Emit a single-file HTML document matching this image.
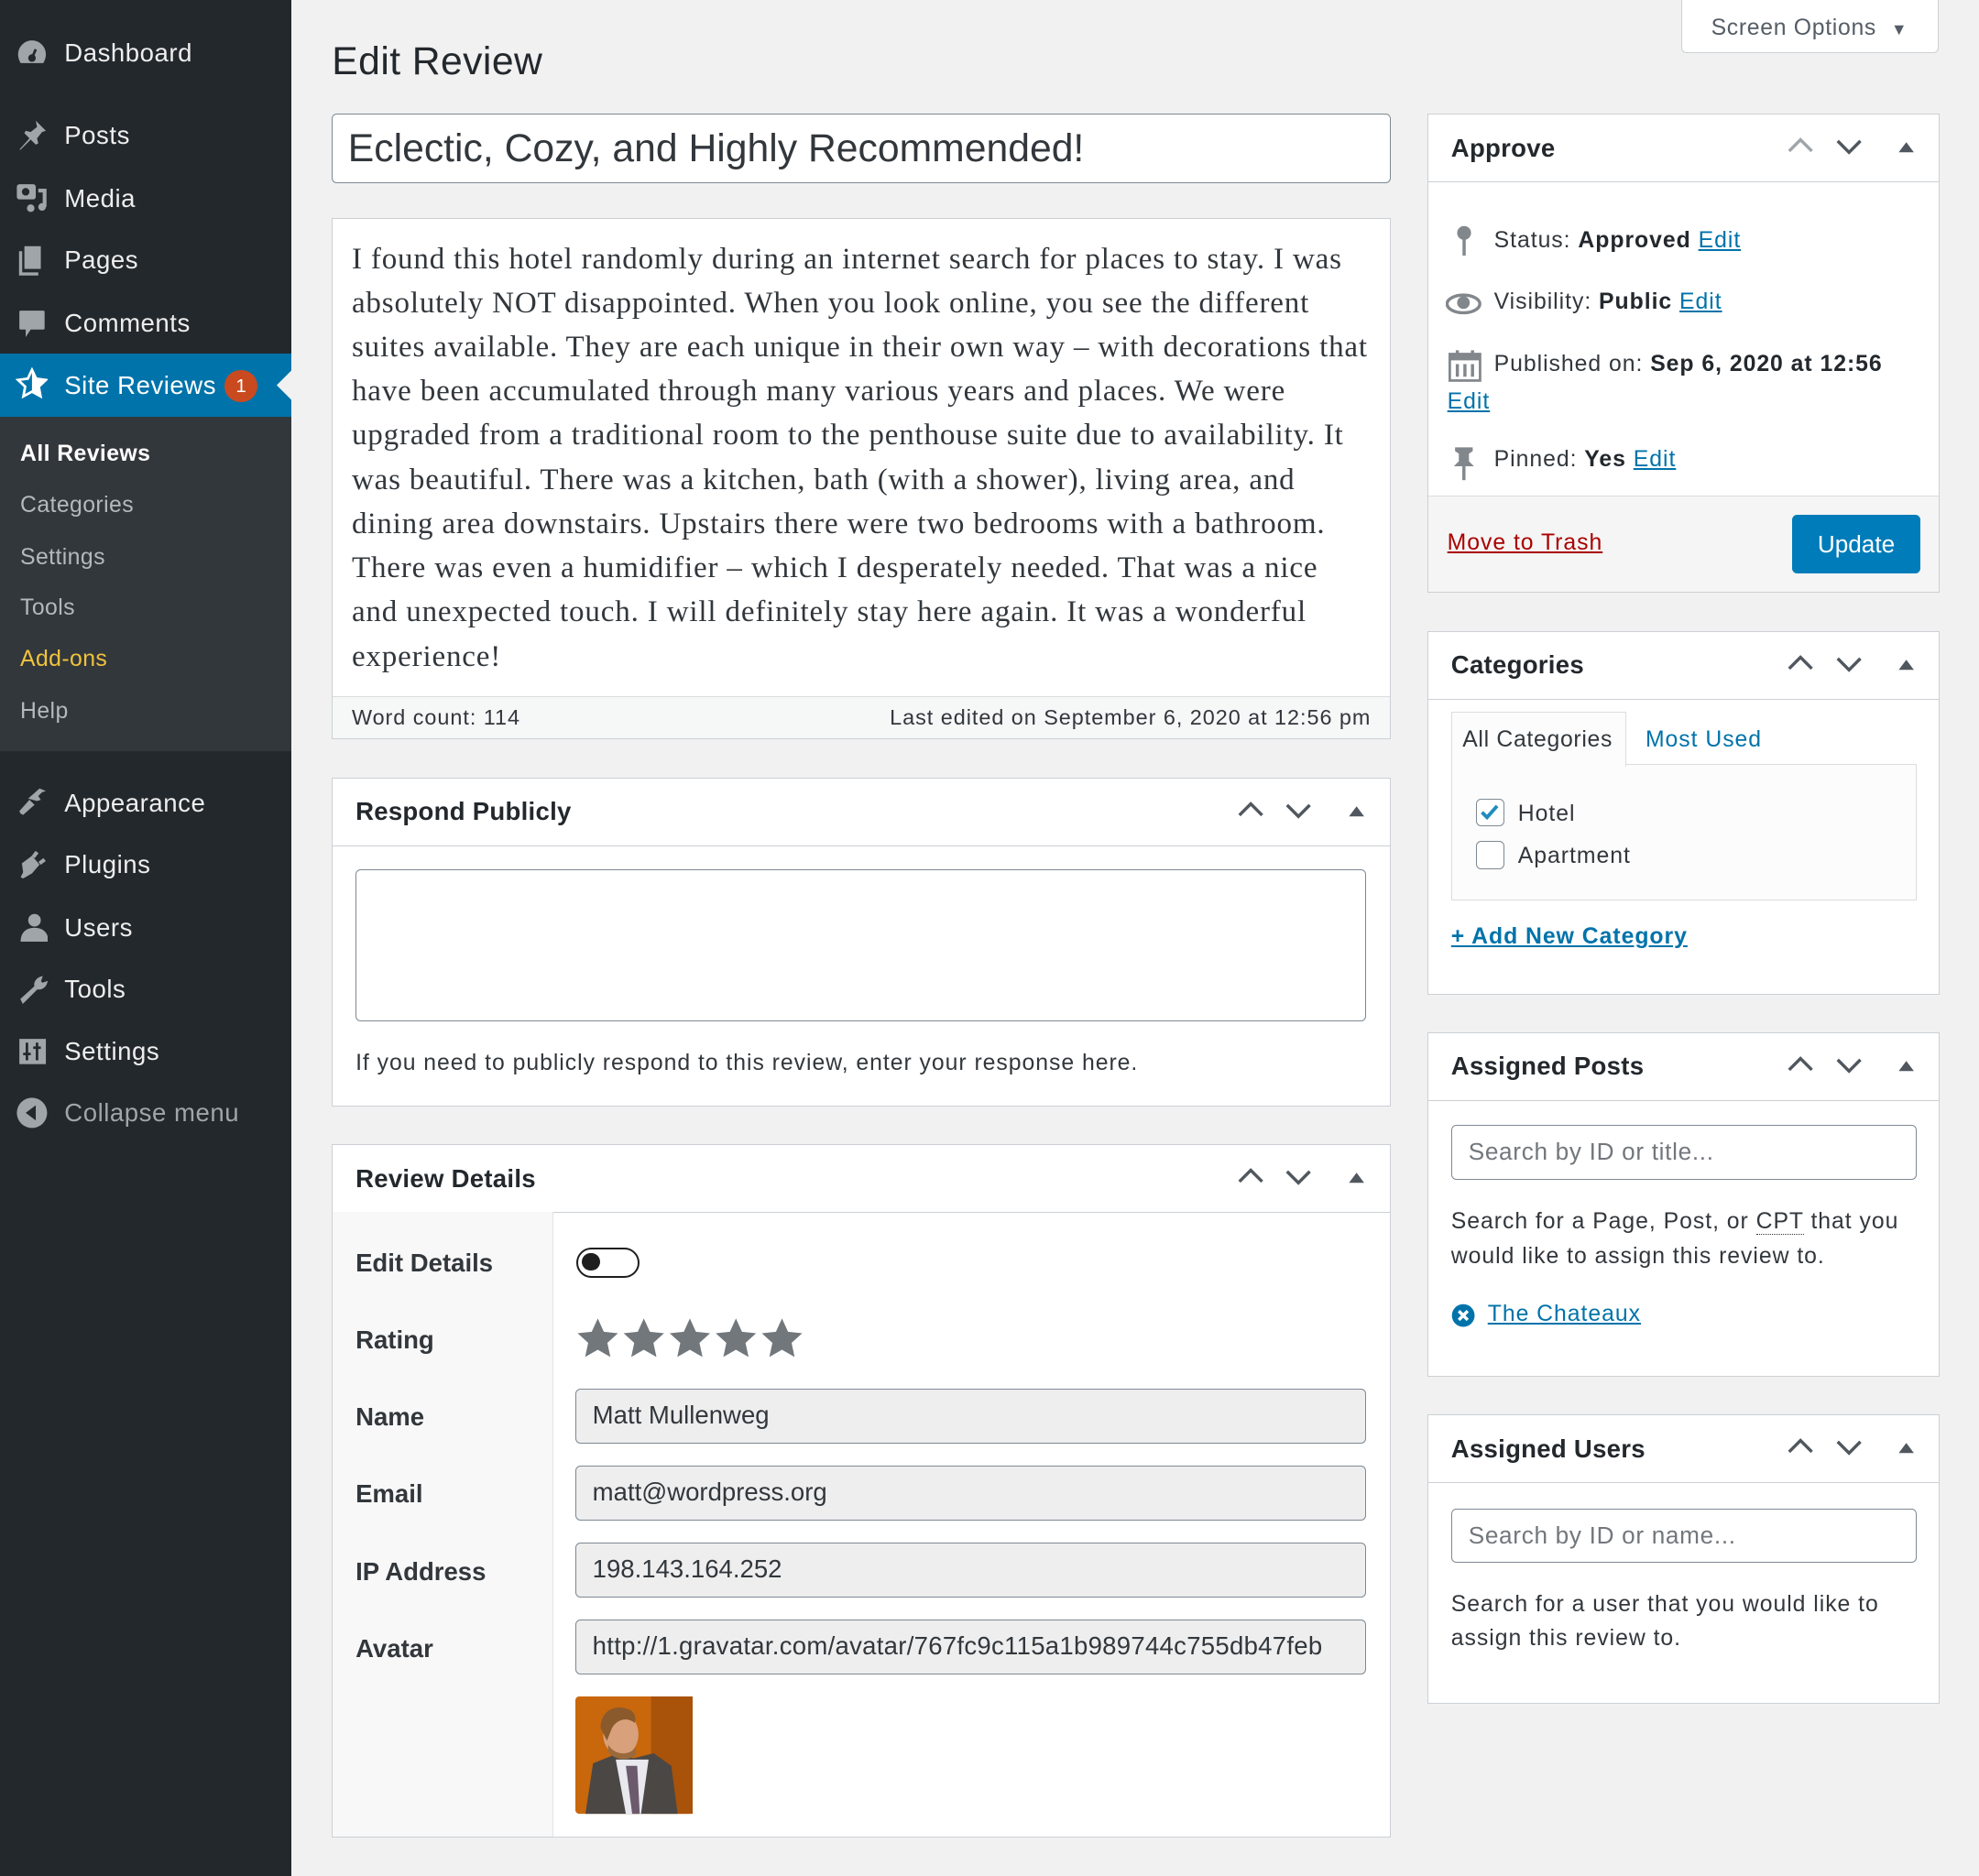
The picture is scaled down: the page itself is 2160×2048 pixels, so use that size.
<!DOCTYPE html>
<html><head><meta charset="utf-8">
<style>
html,body{margin:0;padding:0;}
body{width:1568px;height:1487px;zoom:1.37755;background:#f1f1f1;position:relative;overflow:hidden;font-family:"Liberation Sans",sans-serif;color:#23282d;}
.a{position:absolute;}
#side{left:0;top:0;width:231px;height:1487px;background:#23282d;}
.mi{position:absolute;left:51px;font-size:20px;color:#eee;line-height:24px;letter-spacing:0.4px;}
.ic{position:absolute;left:12px;width:26px;height:26px;}
.sub{position:absolute;left:16px;font-size:18px;color:#b4b9be;line-height:22px;letter-spacing:0.3px;}
.box{position:absolute;background:#fff;border:1px solid #ccd0d4;box-sizing:border-box;}
.hd{position:absolute;left:0;right:0;top:0;height:53px;border-bottom:1px solid #ccd0d4;}
.hd b{position:absolute;left:18px;top:15px;font-size:20px;color:#23282d;letter-spacing:0.2px;}
.ctl{position:absolute;top:16px;}
.t{position:absolute;font-size:18px;line-height:22px;color:#32373c;white-space:nowrap;letter-spacing:0.7px;}
a,.lnk{color:#0073aa;text-decoration:underline;}
.inp{position:absolute;background:#eeeeee;border:1px solid #7e8993;border-radius:4px;box-sizing:border-box;font-size:20px;padding-left:13px;line-height:40px;color:#32373c;white-space:nowrap;overflow:hidden;}
.lab{position:absolute;left:18px;font-size:20px;font-weight:bold;color:#32373c;}
.serif{position:absolute;left:15px;top:14px;font-family:"Liberation Serif",serif;font-size:24px;line-height:35px;color:#32373c;white-space:nowrap;letter-spacing:0.6px;}
</style></head><body>
<div id="side" class="a">
  <svg class="ic" style="top:29px" viewBox="0 0 26 26"><path d="M13 3a11 11 0 0 0-11 11c0 3 1 5 2 7h18c1-2 2-4 2-7A11 11 0 0 0 13 3z" fill="#a0a5aa"/><circle cx="13" cy="17" r="3" fill="#23282d"/><path d="M13 17l3-7" stroke="#23282d" stroke-width="2"/></svg>
  <div class="mi" style="top:30px">Dashboard</div>
  <svg class="ic" style="top:94px" viewBox="0 0 26 26"><path d="M16 2l8 8-3 1-4 5 1 4-2 1-4-4-8 8-1 0 8-9-4-4 1-2 4 1 5-4z" fill="#a0a5aa"/></svg>
  <div class="mi" style="top:95px">Posts</div>
  <svg class="ic" style="top:143px" viewBox="0 0 26 26"><rect x="1" y="3" width="15" height="12" rx="2" fill="#a0a5aa"/><circle cx="8" cy="9" r="3" fill="#23282d"/><path d="M18 8h5v13" stroke="#a0a5aa" stroke-width="3" fill="none"/><circle cx="21" cy="21" r="3" fill="#a0a5aa"/><circle cx="12" cy="22" r="3" fill="#a0a5aa"/></svg>
  <div class="mi" style="top:145px">Media</div>
  <svg class="ic" style="top:193px" viewBox="0 0 26 26"><rect x="7" y="2" width="13" height="18" fill="#a0a5aa"/><path d="M4 6v18h14" stroke="#a0a5aa" stroke-width="2.5" fill="none"/></svg>
  <div class="mi" style="top:194px">Pages</div>
  <svg class="ic" style="top:243px" viewBox="0 0 26 26"><path d="M4 3h18a1 1 0 0 1 1 1v13a1 1 0 0 1-1 1H12l-4 6v-6H4a1 1 0 0 1-1-1V4a1 1 0 0 1 1-1z" fill="#a0a5aa"/></svg>
  <div class="mi" style="top:244px">Comments</div>
  <div class="a" style="left:0;top:280px;width:231px;height:50px;background:#0073aa"></div>
  <svg class="a" style="left:219px;top:293px" width="12" height="24"><path d="M12 0L0 12l12 12z" fill="#f1f1f1"/></svg>
  <svg class="ic" style="top:291px" viewBox="0 0 26 26"><path d="M13 2l3.3 7 7.7 1-5.6 5.3 1.4 7.7L13 19.3 6.2 23l1.4-7.7L2 10l7.7-1z" fill="none" stroke="#fff" stroke-width="2"/><path d="M13 2l3.3 7 7.7 1-5.6 5.3 1.4 7.7L13 19.3z" fill="#fff"/></svg>
  <div class="mi" style="top:293px;color:#fff">Site Reviews</div>
  <div class="a" style="left:178px;top:293px;width:26px;height:26px;border-radius:13px;background:#ca4a1f;color:#fff;font-size:15px;text-align:center;line-height:26px">1</div>
  <div class="a" style="left:0;top:330px;width:231px;height:265px;background:#32373c"></div>
  <div class="sub" style="top:349px;color:#fff;font-weight:bold">All Reviews</div>
  <div class="sub" style="top:390px">Categories</div>
  <div class="sub" style="top:431px">Settings</div>
  <div class="sub" style="top:471px">Tools</div>
  <div class="sub" style="top:512px;color:#f0c33c">Add-ons</div>
  <div class="sub" style="top:553px">Help</div>
  <svg class="ic" style="top:623px" viewBox="0 0 26 26"><path d="M10 10l9-8 5 2-3 1-3 3 2 3-3 1z" fill="#a0a5aa"/><path d="M11 11l4 4-9 8-2-1-1-2z" fill="#a0a5aa"/></svg>
  <div class="mi" style="top:624px">Appearance</div>
  <svg class="ic" style="top:672px" viewBox="0 0 26 26"><path d="M5 12l8-6 6 7-6 7-7 4-2-1 2-4z" fill="#a0a5aa"/><path d="M14 7l3-4M19 12l4-3" stroke="#a0a5aa" stroke-width="3"/></svg>
  <div class="mi" style="top:673px">Plugins</div>
  <svg class="ic" style="top:722px" viewBox="0 0 26 26"><circle cx="15" cy="7" r="5" fill="#a0a5aa"/><path d="M4 24c0-8 5-11 11-11s11 3 11 11z" fill="#a0a5aa"/></svg>
  <div class="mi" style="top:723px">Users</div>
  <svg class="ic" style="top:771px" viewBox="0 0 26 26"><path d="M6 23l11-11c3 1 6-1 7-4l-3 1-2-2 1-3c-3 1-5 4-4 7L5 21z" fill="#a0a5aa" stroke="#a0a5aa" stroke-width="2"/></svg>
  <div class="mi" style="top:772px">Tools</div>
  <svg class="ic" style="top:820px" viewBox="0 0 26 26"><rect x="3" y="3" width="21" height="20" fill="#a0a5aa"/><path d="M9 6v14M17 6v14M6 15h6M14 10h6" stroke="#23282d" stroke-width="2"/></svg>
  <div class="mi" style="top:821px">Settings</div>
  <svg class="ic" style="top:869px" viewBox="0 0 26 26"><circle cx="13" cy="13" r="12" fill="#a0a5aa"/><path d="M16 7v12l-8-6z" fill="#23282d"/></svg>
  <div class="mi" style="top:870px;color:#a0a5aa">Collapse menu</div>
</div>

<div class="a" style="left:1332px;top:-2px;width:204px;height:44px;background:#fff;border:1px solid #ccd0d4;box-sizing:border-box;border-radius:0 0 4px 4px;font-size:18px;color:#555d66;line-height:48px;padding-left:23px;letter-spacing:0.5px">Screen Options <span style="font-size:13px;margin-left:6px">▼</span></div>

<div class="a" style="left:263px;top:31px;font-size:31px;color:#23282d;letter-spacing:0.3px">Edit Review</div>
<div class="a" style="left:263px;top:90px;width:839px;height:55px;background:#fff;border:1px solid #7e8993;border-radius:4px;box-sizing:border-box;font-size:31px;line-height:54px;padding-left:12px;color:#32373c">Eclectic, Cozy, and Highly Recommended!</div>

<div class="box" style="left:263px;top:173px;width:839px;height:413px;">
  <div class="serif">I found this hotel randomly during an internet search for places to stay. I was<br>absolutely NOT disappointed. When you look online, you see the different<br>suites available. They are each unique in their own way – with decorations that<br>have been accumulated through many various years and places. We were<br>upgraded from a traditional room to the penthouse suite due to availability. It<br>was beautiful. There was a kitchen, bath (with a shower), living area, and<br>dining area downstairs. Upstairs there were two bedrooms with a bathroom.<br>There was even a humidifier – which I desperately needed. That was a nice<br>and unexpected touch. I will definitely stay here again. It was a wonderful<br>experience!</div>
  <div class="a" style="left:0;right:0;top:378px;bottom:0;background:#f6f7f7;border-top:1px solid #dcdcde"></div>
  <div class="t" style="left:15px;top:384px;font-size:17px">Word count: 114</div>
  <div class="t" style="right:15px;top:384px;font-size:17px">Last edited on September 6, 2020 at 12:56 pm</div>
</div>

<div class="box" style="left:263px;top:616px;width:839px;height:261px;">
  <div class="hd"><b>Respond Publicly</b>
    <svg class="ctl" style="left:716px" width="22" height="18"><path d="M2 13l9-9 9 9" stroke="#50575e" stroke-width="2.5" fill="none"/></svg>
    <svg class="ctl" style="left:754px" width="22" height="18"><path d="M2 5l9 9 9-9" stroke="#50575e" stroke-width="2.5" fill="none"/></svg>
    <svg class="ctl" style="left:804px" width="14" height="18"><path d="M1 14L7 6l6 8z" fill="#50575e"/></svg>
  </div>
  <div class="a" style="left:18px;top:72px;width:801px;height:121px;border:1px solid #7e8993;border-radius:4px;box-sizing:border-box;background:#fff"></div>
  <div class="t" style="left:18px;top:215px">If you need to publicly respond to this review, enter your response here.</div>
</div>

<div class="box" style="left:263px;top:907px;width:839px;height:549px;">
  <div class="hd"><b>Review Details</b>
    <svg class="ctl" style="left:716px" width="22" height="18"><path d="M2 13l9-9 9 9" stroke="#50575e" stroke-width="2.5" fill="none"/></svg>
    <svg class="ctl" style="left:754px" width="22" height="18"><path d="M2 5l9 9 9-9" stroke="#50575e" stroke-width="2.5" fill="none"/></svg>
    <svg class="ctl" style="left:804px" width="14" height="18"><path d="M1 14L7 6l6 8z" fill="#50575e"/></svg>
  </div>
  <div class="a" style="left:0;top:53px;width:174px;bottom:0;background:#f8f8f8;border-right:1px solid #e2e4e7"></div>
  <div class="lab" style="top:82px">Edit Details</div>
  <div class="lab" style="top:143px">Rating</div>
  <div class="lab" style="top:204px">Name</div>
  <div class="lab" style="top:265px">Email</div>
  <div class="lab" style="top:326px">IP Address</div>
  <div class="lab" style="top:387px">Avatar</div>
  <div class="a" style="left:193px;top:81px;width:50px;height:24px;border:2px solid #1e1e1e;border-radius:14px;box-sizing:border-box"><div class="a" style="left:3px;top:3px;width:14px;height:14px;border-radius:7px;background:#1e1e1e"></div></div>
  <svg class="a" style="left:193px;top:136px" width="180" height="36" viewBox="0 0 180 36">
    <g fill="#72777c">
      <path id="s" d="M17 1l4.8 10.5 11.2 1.2-8.4 7.6 2.4 11.2L17 25.8 7 31.5l2.4-11.2L1 12.7l11.2-1.2z"/>
      <use href="#s" x="36.5"/><use href="#s" x="73"/><use href="#s" x="109.5"/><use href="#s" x="146"/>
    </g>
  </svg>
  <div class="inp" style="left:192px;top:193px;width:627px;height:43px">Matt Mullenweg</div>
  <div class="inp" style="left:192px;top:254px;width:627px;height:43px">matt@wordpress.org</div>
  <div class="inp" style="left:192px;top:315px;width:627px;height:43px">198.143.164.252</div>
  <div class="inp" style="left:192px;top:376px;width:627px;height:43px;font-size:20px;letter-spacing:0.2px">http://1.gravatar.com/avatar/767fc9c115a1b989744c755db47feb</div>
  <svg class="a" style="left:192px;top:437px" width="93" height="93" viewBox="0 0 93 93">
    <rect width="93" height="93" rx="3" fill="#c8670c"/>
    <rect x="60" width="33" height="93" fill="#a8520a"/>
    <path d="M8 93l6-40 20-8 12 4 16-4 14 10 5 38z" fill="#4a4744"/>
    <path d="M32 50l8 43h12l6-43z" fill="#e8e8ee"/>
    <path d="M40 55l5 38h6l-2-38z" fill="#6b5a6c"/>
    <ellipse cx="36" cy="30" rx="14" ry="17" fill="#d9a07c"/>
    <path d="M20 25c0-14 12-20 24-14 4 3 4 8 3 10-6-5-14-3-18 4l-4 10z" fill="#8a5a2c"/>
    <path d="M26 38c4 8 16 10 22 2v6c-6 6-18 4-22-2z" fill="#9a6a3c"/>
  </svg>
</div>

<div class="box" style="left:1131px;top:90px;width:406px;height:380px;">
  <div class="hd"><b>Approve</b>
    <svg class="ctl" style="left:284px" width="22" height="18"><path d="M2 13l9-9 9 9" stroke="#a0a5aa" stroke-width="2.5" fill="none"/></svg>
    <svg class="ctl" style="left:322px" width="22" height="18"><path d="M2 5l9 9 9-9" stroke="#50575e" stroke-width="2.5" fill="none"/></svg>
    <svg class="ctl" style="left:372px" width="14" height="18"><path d="M1 14L7 6l6 8z" fill="#50575e"/></svg>
  </div>
  <svg class="a" style="left:20px;top:88px" width="18" height="26"><circle cx="8" cy="6" r="5.5" fill="#82878c"/><path d="M8 10v14" stroke="#82878c" stroke-width="2.5"/></svg>
  <div class="t" style="left:52px;top:89px">Status: <b style="color:#23282d">Approved</b> <span class="lnk">Edit</span></div>
  <svg class="a" style="left:14px;top:140px" width="28" height="20"><ellipse cx="14" cy="10" rx="13" ry="7" fill="none" stroke="#82878c" stroke-width="2.5"/><circle cx="14" cy="9" r="5" fill="#82878c"/></svg>
  <div class="t" style="left:52px;top:138px">Visibility: <b style="color:#23282d">Public</b> <span class="lnk">Edit</span></div>
  <svg class="a" style="left:16px;top:186px" width="26" height="26"><rect x="1" y="4" width="24" height="21" fill="none" stroke="#82878c" stroke-width="2"/><rect x="1" y="4" width="24" height="5" fill="#82878c"/><path d="M7 1v6M19 1v6M7 12v10M13 12v10M19 12v10" stroke="#82878c" stroke-width="2.5"/></svg>
  <div class="t" style="left:52px;top:187px">Published on: <b style="color:#23282d">Sep 6, 2020 at 12:56</b></div>
  <div class="t lnk" style="left:15px;top:217px">Edit</div>
  <svg class="a" style="left:18px;top:263px" width="20" height="28"><path d="M3 1h14v3l-3 2v6l4 4H2l4-4V6L3 4z" fill="#82878c"/><path d="M10 16v11" stroke="#82878c" stroke-width="2.5"/></svg>
  <div class="t" style="left:52px;top:263px">Pinned: <b style="color:#23282d">Yes</b> <span class="lnk">Edit</span></div>
  <div class="a" style="left:0;right:0;top:302px;bottom:0;background:#f5f5f5;border-top:1px solid #dddddd"></div>
  <div class="t" style="left:15px;top:329px;color:#a00;text-decoration:underline">Move to Trash</div>
  <div class="a" style="left:288px;top:317px;width:102px;height:47px;background:#007cba;border-radius:4px;color:#fff;font-size:19px;text-align:center;line-height:47px">Update</div>
</div>

<div class="box" style="left:1131px;top:500px;width:406px;height:288px;">
  <div class="hd"><b>Categories</b>
    <svg class="ctl" style="left:284px" width="22" height="18"><path d="M2 13l9-9 9 9" stroke="#50575e" stroke-width="2.5" fill="none"/></svg>
    <svg class="ctl" style="left:322px" width="22" height="18"><path d="M2 5l9 9 9-9" stroke="#50575e" stroke-width="2.5" fill="none"/></svg>
    <svg class="ctl" style="left:372px" width="14" height="18"><path d="M1 14L7 6l6 8z" fill="#50575e"/></svg>
  </div>
  <div class="a" style="left:18px;top:105px;width:369px;height:108px;background:#fcfcfc;border:1px solid #dddddd;box-sizing:border-box"></div>
  <div class="a" style="left:18px;top:63px;width:139px;height:44px;background:#fcfcfc;border:1px solid #dddddd;border-bottom:none;box-sizing:border-box"></div>
  <div class="t" style="left:27px;top:75px;color:#32373c;letter-spacing:0.5px">All Categories</div>
  <div class="t" style="left:172px;top:75px;color:#0073aa">Most Used</div>
  <div class="a" style="left:38px;top:132px;width:22px;height:22px;border:1px solid #7e8993;border-radius:4px;box-sizing:border-box;background:#fff"><svg width="20" height="20" style="position:absolute;left:0;top:0"><path d="M4 10l4 4 8-9" stroke="#1e8cbe" stroke-width="2.8" fill="none"/></svg></div>
  <div class="t" style="left:71px;top:134px">Hotel</div>
  <div class="a" style="left:38px;top:166px;width:22px;height:22px;border:1px solid #7e8993;border-radius:4px;box-sizing:border-box;background:#fff"></div>
  <div class="t" style="left:71px;top:167px">Apartment</div>
  <div class="t lnk" style="left:18px;top:231px;font-weight:bold;color:#0073aa">+ Add New Category</div>
</div>

<div class="box" style="left:1131px;top:818px;width:406px;height:273px;">
  <div class="hd"><b>Assigned Posts</b>
    <svg class="ctl" style="left:284px" width="22" height="18"><path d="M2 13l9-9 9 9" stroke="#50575e" stroke-width="2.5" fill="none"/></svg>
    <svg class="ctl" style="left:322px" width="22" height="18"><path d="M2 5l9 9 9-9" stroke="#50575e" stroke-width="2.5" fill="none"/></svg>
    <svg class="ctl" style="left:372px" width="14" height="18"><path d="M1 14L7 6l6 8z" fill="#50575e"/></svg>
  </div>
  <div class="a" style="left:18px;top:73px;width:369px;height:43px;border:1px solid #7e8993;border-radius:4px;box-sizing:border-box;font-size:19px;color:#72777c;line-height:41px;padding-left:13px;letter-spacing:0.5px">Search by ID or title...</div>
  <div class="t" style="left:18px;top:139px">Search for a Page, Post, or <span style="border-bottom:1px dotted #32373c">CPT</span> that you</div>
  <div class="t" style="left:18px;top:166px">would like to assign this review to.</div>
  <svg class="a" style="left:18px;top:214px" width="19" height="19"><circle cx="9.5" cy="9.5" r="9" fill="#0073aa"/><path d="M6 6l7 7M13 6l-7 7" stroke="#fff" stroke-width="2.5"/></svg>
  <div class="t lnk" style="left:47px;top:212px">The Chateaux</div>
</div>

<div class="box" style="left:1131px;top:1121px;width:406px;height:229px;">
  <div class="hd"><b>Assigned Users</b>
    <svg class="ctl" style="left:284px" width="22" height="18"><path d="M2 13l9-9 9 9" stroke="#50575e" stroke-width="2.5" fill="none"/></svg>
    <svg class="ctl" style="left:322px" width="22" height="18"><path d="M2 5l9 9 9-9" stroke="#50575e" stroke-width="2.5" fill="none"/></svg>
    <svg class="ctl" style="left:372px" width="14" height="18"><path d="M1 14L7 6l6 8z" fill="#50575e"/></svg>
  </div>
  <div class="a" style="left:18px;top:74px;width:369px;height:43px;border:1px solid #7e8993;border-radius:4px;box-sizing:border-box;font-size:19px;color:#72777c;line-height:41px;padding-left:13px;letter-spacing:0.5px">Search by ID or name...</div>
  <div class="t" style="left:18px;top:139px">Search for a user that you would like to</div>
  <div class="t" style="left:18px;top:166px">assign this review to.</div>
</div>
</body></html>
